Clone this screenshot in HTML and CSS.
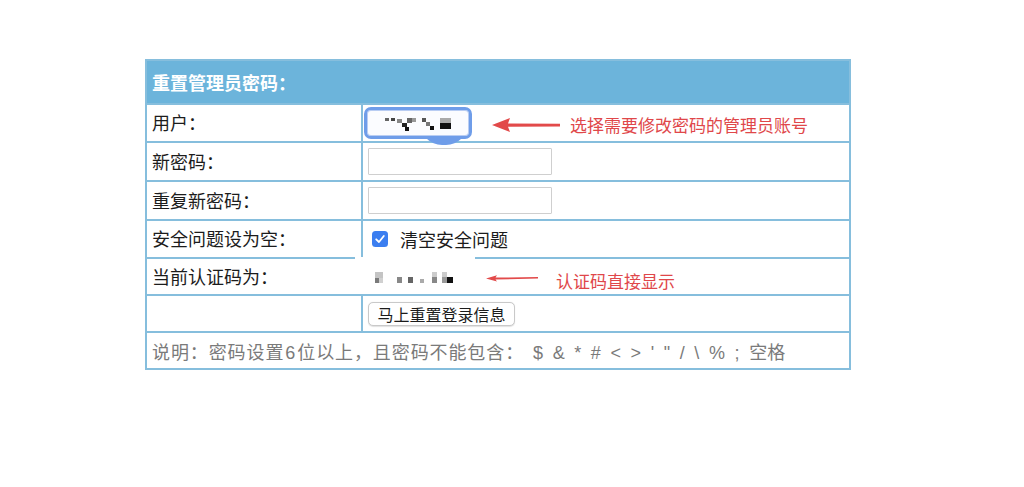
FILE: index.html
```html
<!DOCTYPE html>
<html lang="zh-CN">
<head>
<meta charset="utf-8">
<title>重置管理员密码</title>
<link rel="stylesheet" href="styles.css">
</head>
<body>
<div class="panel">
  <div class="head">重置管理员密码：</div>

  <div class="row r1">
    <div class="label">用户：</div>
    <div class="field">
      <div class="select-wrap">
        <span class="blob"></span>
        <div class="select">
          <svg width="102" height="26" viewBox="0 0 102 26">
            <rect x="18" y="8" width="4" height="3" fill="#666"/>
            <rect x="24" y="8" width="4" height="3" fill="#444"/>
            <rect x="30" y="9" width="5" height="4" fill="#888"/>
            <rect x="35" y="13" width="5" height="4" fill="#222"/>
            <rect x="40" y="8" width="5" height="5" fill="#666"/>
            <rect x="45" y="8" width="4" height="4" fill="#999"/>
            <rect x="38" y="17" width="4" height="4" fill="#111"/>
            <rect x="55" y="8" width="4" height="4" fill="#555"/>
            <rect x="59" y="12" width="4" height="4" fill="#777"/>
            <rect x="63" y="16" width="4" height="4" fill="#111"/>
            <rect x="73" y="8" width="11" height="5" fill="#aaa"/>
            <rect x="73" y="13" width="11" height="6" fill="#111"/>
          </svg>
        </div>
      </div>
      <svg class="arrow1" width="70" height="16" viewBox="0 0 70 16">
        <polygon points="1,8 19,1 17,6.5 69,6.8 69,9.4 17,9.8 19,15" fill="#e24a4a"/>
      </svg>
      <span class="note">选择需要修改密码的管理员账号</span>
    </div>
  </div>

  <div class="row r2">
    <div class="label">新密码：</div>
    <div class="field"><input class="text" type="password"></div>
  </div>

  <div class="row r3">
    <div class="label">重复新密码：</div>
    <div class="field"><input class="text" type="password"></div>
  </div>

  <div class="row r4">
    <div class="label">安全问题设为空：</div>
    <div class="field">
      <span class="check">
        <svg width="16" height="16" viewBox="0 0 16 16">
          <rect x="0" y="0" width="16" height="16" rx="3.5" fill="#3b7ef0"/>
          <polyline points="4.2,8.3 7,11 11.8,5" fill="none" stroke="#fff" stroke-width="1.8" stroke-linecap="round" stroke-linejoin="round"/>
        </svg>
      </span>
      <span class="check-label">清空安全问题</span>
    </div>
  </div>

  <div class="row r5">
    <div class="label">当前认证码为：</div>
    <div class="field">
      <svg class="code" width="84" height="16" viewBox="0 0 84 16">
        <rect x="3" y="2" width="8" height="6" fill="#c4c4c4"/>
        <rect x="3" y="8" width="4" height="5" fill="#7a7a7a"/>
        <rect x="7" y="8" width="4" height="5" fill="#d0d0d0"/>
        <rect x="25" y="7" width="5" height="6" fill="#888"/>
        <rect x="36" y="7" width="5" height="6" fill="#666"/>
        <rect x="48" y="9" width="4" height="4" fill="#aaa"/>
        <rect x="60" y="2" width="5" height="5" fill="#ccc"/>
        <rect x="60" y="7" width="5" height="6" fill="#888"/>
        <rect x="70" y="2" width="5" height="5" fill="#ccc"/>
        <rect x="70" y="7" width="5" height="6" fill="#999"/>
        <rect x="75" y="7" width="6" height="6" fill="#111"/>
      </svg>
      <svg class="arrow2" width="54" height="8" viewBox="0 0 54 8">
        <polygon points="1,4.5 12,1.3 10.5,3.6 53,3.1 53,4.6 10.5,5.4 12,7.6" fill="#e24a4a"/>
      </svg>
      <span class="note note2">认证码直接显示</span>
    </div>
  </div>

  <div class="row r6">
    <div class="label"></div>
    <div class="field"><button class="btn" type="button">马上重置登录信息</button></div>
  </div>

  <div class="row r7">
    <div class="foot"><span class="cjk">说明：密码设置<span class="digit">6</span>位以上，且密码不能包含：</span><span class="symbols">$ &amp; * # &lt; &gt; ' " / \ % ; 空格</span></div>
  </div>
</div>
</body>
</html>
```

FILE: styles.css
```css
html, body {
  margin: 0;
  padding: 0;
  background: #ffffff;
}

body {
  font-family: "Noto Sans CJK SC", "Noto Sans", sans-serif;
  color: #1c1c1c;
}

.panel {
  width: 706px;
  box-sizing: border-box;
  margin: 59px 0 0 145px;
  border: 2px solid #86bedd;
  background: #fff;
}

.head {
  height: 42px;
  background: #6cb4db;
  color: #fff;
  font-size: 18px;
  font-weight: bold;
  display: flex;
  align-items: center;
  padding-left: 5px;
}

.row {
  display: grid;
  grid-template-columns: 216px 1fr;
  border-top: 2px solid #86bedd;
}

.r1 { height: 36px; }
.r2 { height: 37px; }
.r3 { height: 37px; }
.r4 { height: 36px; }
.r5 {
  height: 35px;
  border-top: none;
  padding-top: 2px;
  background: linear-gradient(to right, #86bedd 0 208px, transparent 208px 328px, #86bedd 328px) top left / 100% 2px no-repeat;
}
.r6 { height: 35px; }
.r7 {
  height: 35px;
  display: flex;
}

.label {
  box-sizing: border-box;
  border-right: 2px solid #86bedd;
  font-size: 18px;
  display: flex;
  align-items: center;
  padding-left: 5px;
  padding-bottom: 2px;
  white-space: nowrap;
}

.r5 .label {
  border-right-color: transparent;
}

.field {
  display: flex;
  align-items: center;
  padding-left: 5px;
  font-size: 18px;
}

.select-wrap {
  position: relative;
  isolation: isolate;
  margin-left: -4px;
  margin-right: 19px;
}

.select {
  width: 102px;
  height: 26px;
  border: 3px solid #6f9de9;
  border-radius: 7px;
  background: #fbfcff;
  box-shadow: inset 0 0 0 1px #b9cdf3;
  display: flex;
}

.blob {
  position: absolute;
  left: 56px;
  top: 16px;
  width: 48px;
  height: 22px;
  border-radius: 0 0 24px 24px;
  background: #6f9de9;
  z-index: -1;
}

.arrow1 {
  display: block;
  margin-top: 4px;
  margin-right: 9px;
}

.note {
  color: #e0474a;
  font-size: 17px;
  padding-top: 3px;
}

.note2 {
  padding-top: 8px;
}

.text {
  width: 184px;
  height: 27px;
  box-sizing: border-box;
  border: 1px solid #cfcfcf;
  border-radius: 1px;
  background: #fff;
  margin: 0;
  padding: 0 4px;
}

.check {
  display: flex;
  margin-left: 4px;
  margin-right: 12px;
}

.check-label {
  font-size: 18px;
}

.code {
  display: block;
  margin-left: 4px;
  margin-top: 2px;
  margin-right: 29px;
}

.arrow2 {
  display: block;
  margin-right: 17px;
  margin-top: 2px;
}

.btn {
  width: 147px;
  height: 24px;
  padding: 0;
  margin: 0;
  font-family: "Noto Sans CJK SC", sans-serif;
  font-size: 16px;
  color: #1c1c1c;
  background: #fff;
  border: 1px solid #c9c9c9;
  border-radius: 5px;
  box-shadow: 0 0.5px 1px rgba(0, 0, 0, 0.12);
  line-height: 22px;
}

.foot {
  display: flex;
  align-items: center;
  padding-left: 5px;
  font-size: 18px;
  color: #7a7a7a;
  white-space: pre;
}

.cjk {
  letter-spacing: 0.9px;
}

.digit {
  font-family: "Liberation Sans", sans-serif;
  padding: 0 1px 0 1px;
}

.symbols {
  font-family: "Liberation Sans", "Noto Sans CJK SC", sans-serif;
  word-spacing: 4.6px;
  padding-left: 9px;
}
```
